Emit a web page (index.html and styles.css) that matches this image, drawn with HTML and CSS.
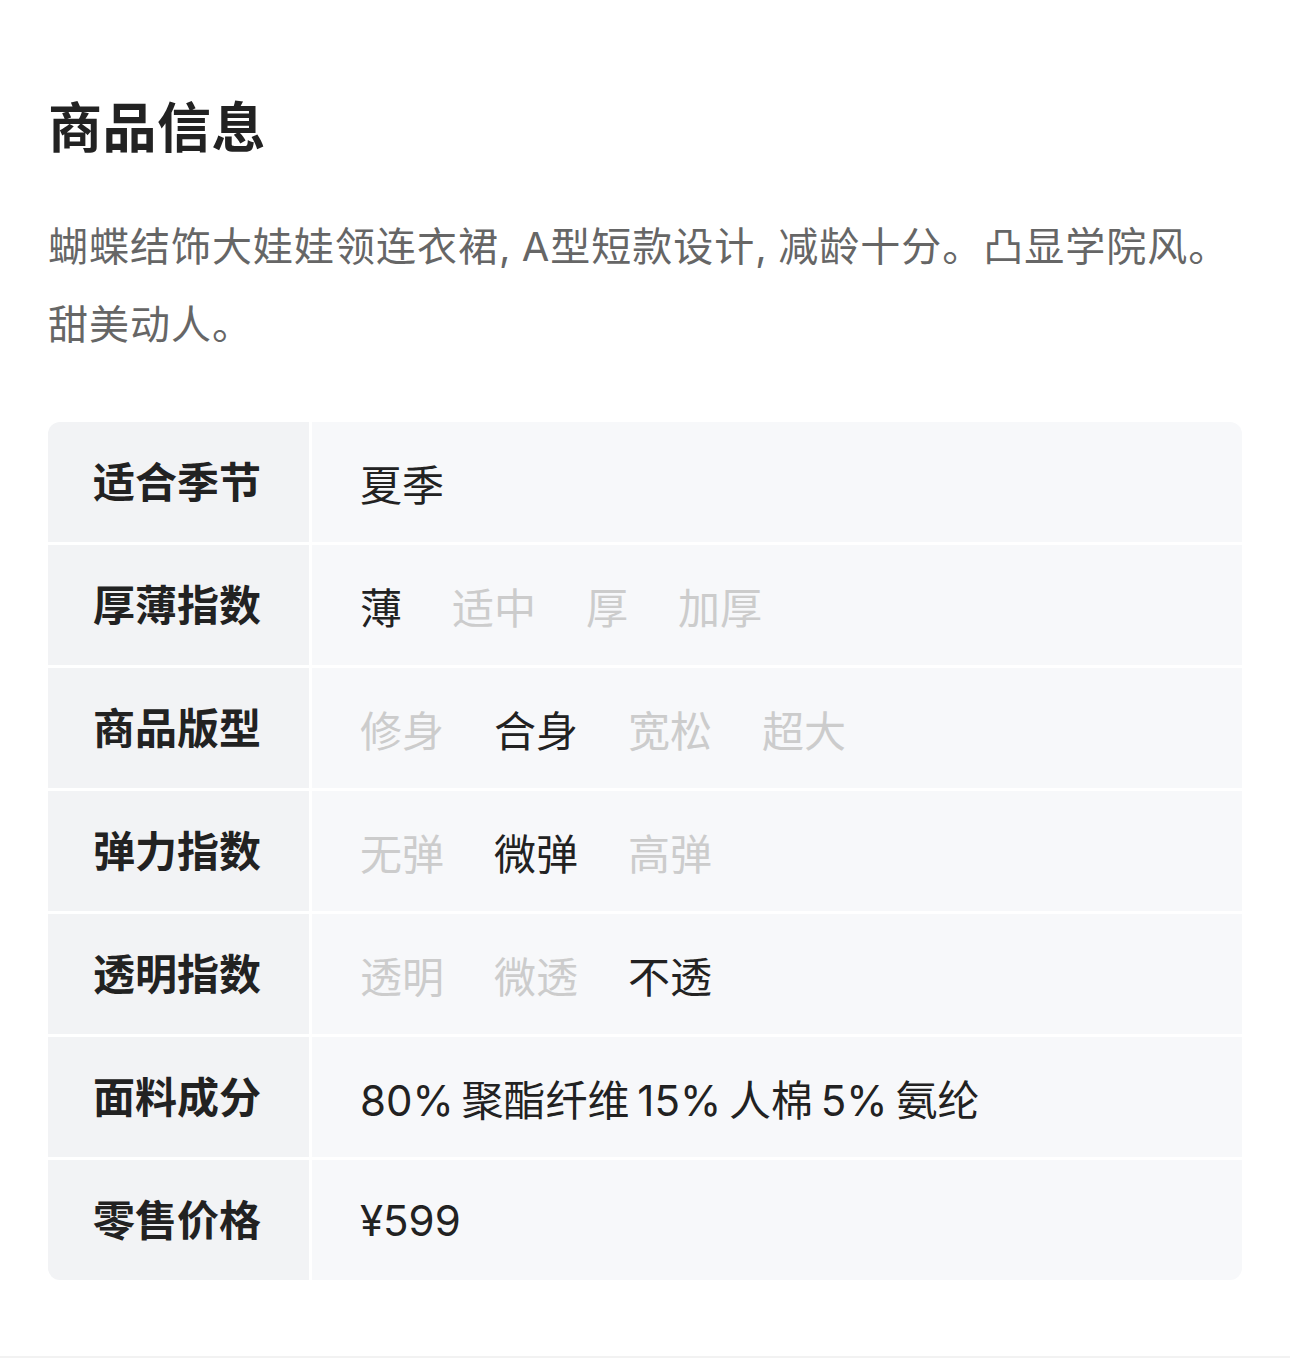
FILE: index.html
```html
<!DOCTYPE html>
<html lang="zh-CN">
<head>
<meta charset="utf-8">
<title>商品信息</title>
<link rel="stylesheet" href="styles.css">
</head>
<body>
<section class="info">
  <h1 class="title">商品信息</h1>
  <p class="desc">蝴蝶结饰大娃娃领连衣裙, A型短款设计, 减龄十分。凸显学院风。甜美动人。</p>
  <div class="table">
    <div class="label">适合季节</div>
    <div class="value"><span class="opt on">夏季</span></div>

    <div class="label">厚薄指数</div>
    <div class="value"><span class="opt on">薄</span><span class="opt">适中</span><span class="opt">厚</span><span class="opt">加厚</span></div>

    <div class="label">商品版型</div>
    <div class="value"><span class="opt">修身</span><span class="opt on">合身</span><span class="opt">宽松</span><span class="opt">超大</span></div>

    <div class="label">弹力指数</div>
    <div class="value"><span class="opt">无弹</span><span class="opt on">微弹</span><span class="opt">高弹</span></div>

    <div class="label">透明指数</div>
    <div class="value"><span class="opt">透明</span><span class="opt">微透</span><span class="opt on">不透</span></div>

    <div class="label">面料成分</div>
    <div class="value"><span class="opt on text">80% 聚酯纤维 15% 人棉 5% 氨纶</span></div>

    <div class="label">零售价格</div>
    <div class="value"><span class="opt on">¥599</span></div>
  </div>
</section>
<div class="divider"></div>
</body>
</html>
```

FILE: styles.css
```css
html, body {
  margin: 0;
  padding: 0;
  background: #ffffff;
}
body {
  font-family: "Inter", "Noto Sans CJK SC", "Noto Sans", sans-serif;
  color: #222222;
}
.info {
  padding: 91px 48px 76px;
}
.title {
  margin: 0;
  font-size: 54px;
  line-height: 76px;
  font-weight: 700;
  color: #222222;
  letter-spacing: 0.5px;
}
.desc {
  margin: 41px 0 0;
  font-size: 40px;
  line-height: 78px;
  letter-spacing: 1px;
  word-spacing: -2px;
  color: #666666;
}
.table {
  margin-top: 58px;
  display: grid;
  grid-template-columns: 261px 1fr;
  grid-auto-rows: 120px;
  gap: 3px;
  border-radius: 12px;
  overflow: hidden;
}
.label {
  background: #f2f3f5;
  display: flex;
  align-items: center;
  padding: 0 0 6px 45px;
  font-size: 42px;
  font-weight: 700;
  color: #222222;
}
.value {
  background: #f7f8fa;
  display: flex;
  align-items: center;
  padding-left: 48px;
  font-size: 42px;
  color: #cccccc;
}
.opt {
  margin-right: 50px;
}
.opt.on {
  color: #222222;
}
.opt.text {
  word-spacing: -4px;
}
.divider {
  height: 3px;
  background: #f2f2f2;
}
```
